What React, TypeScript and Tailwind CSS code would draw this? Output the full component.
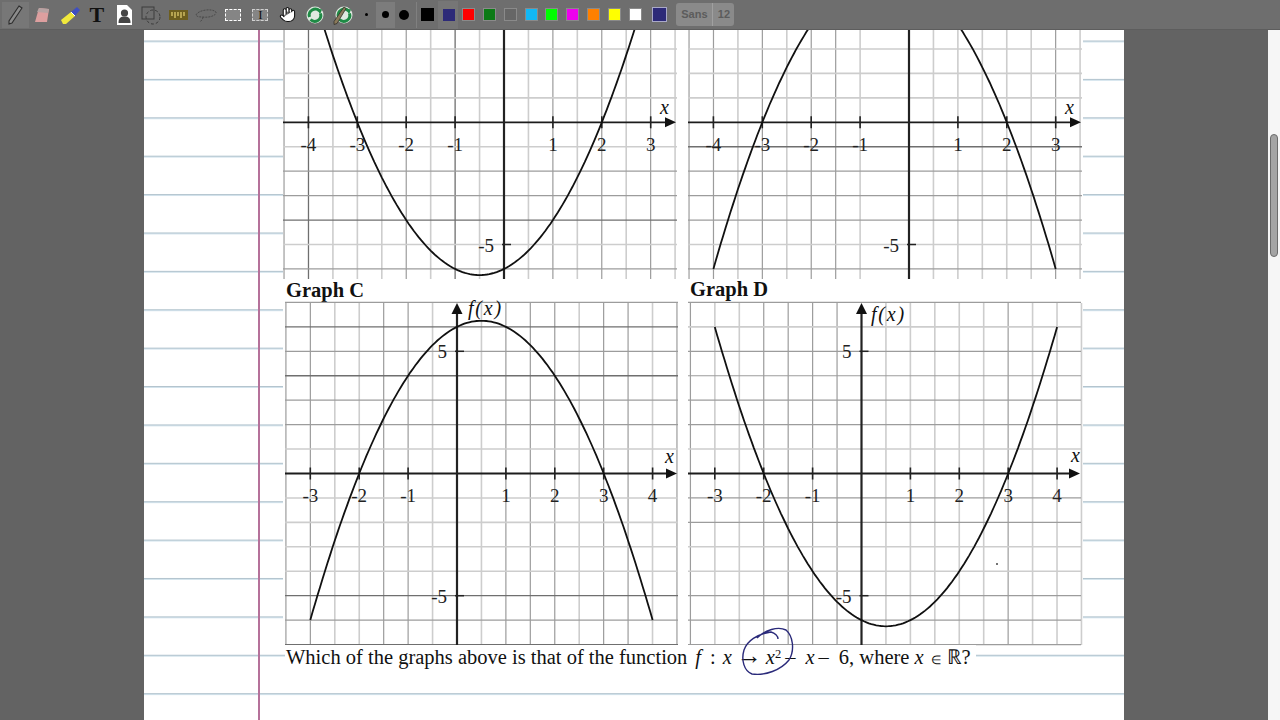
import React from 'react';
import { Hand } from 'lucide-react';

const UNIT = 48.9;
const CELL = 24.44;

const lineStyles = {
  l: { stroke: '#cdcdcd', width: 1.6 },
  m: { stroke: '#9c9c9c', width: 1.2 },
  d: { stroke: '#6f6f6f', width: 1.3 },
} as const;

type Tone = keyof typeof lineStyles;

type GraphProps = {
  width: number;
  height: number;
  ox: number;
  oy: number;
  kStart: number; // first vertical grid line, in half units from the axis
  jStart: number; // first horizontal grid line
  vTones: string;
  hTones: string;
  fn: (x: number) => number;
  from: number;
  to: number;
  ticks: number[];
  xLabel: [number, number];
  yLabels: [string, number, number][];
  fxLabel?: [number, number];
  children?: React.ReactNode;
};

function Graph({ width, height, ox, oy, kStart, jStart, vTones, hTones, fn, from, to, ticks, xLabel, yLabels, fxLabel, children }: GraphProps) {
  const pts: string[] = [];
  for (let x = from; x <= to + 0.001; x += 0.05) {
    pts.push(`${(ox + UNIT * x).toFixed(1)},${(oy - CELL * fn(x)).toFixed(1)}`);
  }

  return (
    <svg width={width} height={height} viewBox={`0 0 ${width} ${height}`} className={`block shrink-0 ${fxLabel ? 'overflow-visible' : ''}`}>
      {vTones.split('').map((t, i) => {
        if (t === '.') return null;
        const s = lineStyles[t as Tone];
        const x = ox + (kStart + i) * CELL;
        return <line key={i} x1={x} x2={x} y1={0} y2={height} stroke={s.stroke} strokeWidth={s.width} />;
      })}
      {hTones.split('').map((t, i) => {
        if (t === '.') return null;
        const s = lineStyles[t as Tone];
        const y = oy + (jStart + i) * CELL;
        return <line key={i} x1={0} x2={width} y1={y} y2={y} stroke={s.stroke} strokeWidth={s.width} />;
      })}

      {/* axes */}
      <line x1={0} x2={width - 6} y1={oy} y2={oy} stroke="#1c1c1c" strokeWidth={1.8} />
      <polygon points={`${width - 1},${oy} ${width - 12},${oy - 5} ${width - 12},${oy + 5}`} fill="#111" />
      <line x1={ox} x2={ox} y1={fxLabel ? 6 : 0} y2={height} stroke="#222" strokeWidth={2.2} />
      {fxLabel && <polygon points={`${ox},0 ${ox - 5.5},11 ${ox + 5.5},11`} fill="#111" />}

      {ticks.map((n) => {
        const x = ox + n * UNIT;
        return (
          <g key={n}>
            <line x1={x} x2={x} y1={oy - 6} y2={oy + 6} stroke="#222" strokeWidth={1.6} />
            <text x={x} y={oy + 28.3} textAnchor="middle" fontSize={19} fill="#222">{n}</text>
          </g>
        );
      })}
      {yLabels.map(([label, y, tx]) => (
        <g key={label}>
          <line x1={ox - 2} x2={ox + 7} y1={oy - y * CELL} y2={oy - y * CELL} stroke="#222" strokeWidth={1.5} />
          <text x={ox - tx} y={oy - y * CELL + 7} textAnchor="end" fontSize={19} fill="#222">{label}</text>
        </g>
      ))}

      <polyline points={pts.join(' ')} fill="none" stroke="#111" strokeWidth={1.8} />

      <text x={xLabel[0]} y={xLabel[1]} fontSize={20} fontStyle="italic" fill="#111">x</text>
      {fxLabel && (
        <text x={fxLabel[0]} y={fxLabel[1]} fontSize={20} fontStyle="italic" letterSpacing={1.8} fill="#111">f(x)</text>
      )}
      {children}
    </svg>
  );
}

function Slot({ selected, children }: { selected?: boolean; children: React.ReactNode }) {
  return (
    <div className={`flex h-[26px] w-[27.25px] shrink-0 items-center justify-center ${selected ? 'bg-[#777777]' : ''}`}>
      {children}
    </div>
  );
}

function RefreshBadge() {
  return (
    <>
      <circle cx="10" cy="10" r="8.5" fill="#dfe8e0" />
      <path d="M4.5 12a6 6 0 0 1 10-6" fill="none" stroke="#1f8a45" strokeWidth="3" />
      <path d="M15.5 8.5a6 6 0 0 1-10 6" fill="none" stroke="#1f8a45" strokeWidth="3" />
      <path d="M12 3.5l5 1-2 5z" fill="#1f8a45" />
    </>
  );
}

const toolIcons: React.ReactNode[] = [
  <svg key="pen" width="20" height="22" viewBox="0 0 20 22">
    <path d="M14 2l3 2-10 15-3 1 0-3z" fill="#8c8c8c" stroke="#2e2e2e" strokeWidth="1.1" />
  </svg>,
  <svg key="eraser" width="20" height="20" viewBox="0 0 20 20">
    <path d="M7 3l10 1-2 13H3z" fill="#dd9f9f" />
    <path d="M7 3l10 1-1 4-11-1z" fill="#b7a3a3" />
  </svg>,
  <svg key="marker" width="22" height="20" viewBox="0 0 22 20">
    <path d="M2 15l10-8 4 4-9 8H4z" fill="#f0e83c" />
    <path d="M12 7l6-5 3 3-5 6z" fill="#3f4fc0" />
    <path d="M12 7l4 4" stroke="#ffffff" strokeWidth="1" />
  </svg>,
  <span key="t" className="text-[22px] leading-none font-bold text-[#111111]">T</span>,
  <svg key="file" width="15" height="20" viewBox="0 0 15 20">
    <path d="M0 0h10l5 5v15H0z" fill="#ffffff" />
    <circle cx="7.5" cy="8" r="3.6" fill="#444444" />
    <path d="M1.5 18c0-5 2-6.5 6-6.5s6 1.5 6 6.5z" fill="#444444" />
  </svg>,
  <svg key="shape" width="22" height="22" viewBox="0 0 22 22" fill="none" stroke="#3c3c3c" strokeWidth="1">
    <rect x="2" y="3" width="12" height="12" />
    <circle cx="13" cy="13" r="7" strokeDasharray="3 2" />
  </svg>,
  <svg key="ruler" width="19" height="10" viewBox="0 0 19 10">
    <rect width="19" height="10" fill="#6d5e1e" />
    <path d="M3 2v4M6 2v6M9 2v4M12 2v6M15 2v4" stroke="#e6d373" strokeWidth="1.2" />
  </svg>,
  <svg key="lasso" width="24" height="16" viewBox="0 0 24 16" fill="none" stroke="#4a4a4a" strokeWidth="1">
    <path d="M2 8c2-5 16-7 20-3 1 3-6 6-13 5C6 10 3 10 2 8zM9 10c0 2-2 4-3 5" strokeDasharray="2 1" />
  </svg>,
  <div key="marquee" className="h-[12px] w-[16px] border border-dashed border-white bg-[#858585]" />,
  <div key="select" className="flex h-[12px] w-[16px] items-center justify-center border border-dashed border-[#d0d0d0] bg-[#858585]">
    <span className="text-[13px] leading-none text-[#111111]">I</span>
  </div>,
  <Hand key="hand" size={17} fill="#ffffff" stroke="#111111" strokeWidth={1.5} />,
  <svg key="refresh" width="20" height="20" viewBox="0 0 20 20"><RefreshBadge /></svg>,
  <svg key="penrefresh" width="22" height="20" viewBox="0 0 22 20">
    <g transform="translate(3 0)"><RefreshBadge /></g>
    <path d="M13 2l2 1.5-9 15-3 1v-3z" fill="#8a7a5a" stroke="#33302a" strokeWidth="0.8" />
  </svg>,
];

const swatches = [
  'bg-[#ff0000]',
  'bg-[#0c7a16]',
  'bg-[#666666]',
  'bg-[#12b8f5]',
  'bg-[#00ff00]',
  'bg-[#ee00ee]',
  'bg-[#ff8000]',
  'bg-[#ffff00]',
  'bg-[#ffffff]',
];

function Toolbar() {
  return (
    <div className="flex h-[30px] shrink-0 items-center border-b border-[#5d5d5d] bg-[#6e6e6e] pl-[1.5px]">
      {toolIcons.map((icon, i) => (
        <Slot key={i} selected={i === 0}>{icon}</Slot>
      ))}
      <div className="ml-[1px] flex h-[26px] w-[19px] items-center justify-center">
        <div className="h-[3px] w-[3px] rounded-full bg-black" />
      </div>
      <div className="flex h-[26px] w-[19px] items-center justify-center bg-[#7c7c7c]">
        <div className="h-[7px] w-[7px] rounded-full bg-black" />
      </div>
      <div className="flex h-[26px] w-[19px] items-center justify-center">
        <div className="h-[10px] w-[10px] rounded-full bg-black" />
      </div>
      <div className="ml-[2px] h-[26px] w-px bg-[#808080]" />
      <div className="flex h-[26px] w-[21px] items-center justify-center">
        <div className="h-[13px] w-[13px] bg-black" />
      </div>
      <div className="flex h-[28px] w-[20.5px] items-center justify-center bg-[#767676] pl-[2px]">
        <div className="h-[12px] w-[12px] bg-[#2d2a78]" />
      </div>
      {swatches.map((c) => (
        <div key={c} className="flex h-[26px] w-[20.8px] items-center justify-center">
          <div className={`h-[13px] w-[13px] border border-[#8a8a8a] ${c}`} />
        </div>
      ))}
      <div className="flex h-[26px] w-[29px] items-center justify-center">
        <div className="h-[15px] w-[15px] border border-[#a9a9c8] bg-[#2d2a78]" />
      </div>
      <div className="ml-[2px] flex h-[23px] font-['Liberation_Sans',sans-serif] text-[11px] font-bold text-[#5c5c5c]">
        <div className="flex w-[37px] items-center justify-center rounded-l-[3px] border-r border-[#a0a0a0] bg-[#8a8a8a]">Sans</div>
        <div className="flex w-[21px] items-center justify-center rounded-r-[3px] bg-[#8a8a8a]">12</div>
      </div>
    </div>
  );
}

function Question() {
  return (
    <div className="relative ml-[2px] inline-block whitespace-nowrap bg-white pr-[5px] pl-px text-[20.5px] leading-[24px] text-[#111111]">
      Which of the graphs above is that of the function
      <i className="ml-[8px]">f</i>
      <span className="ml-[9px]">:</span>
      <i className="ml-[7px]">x</i>
      <span className="ml-[5px] text-[25px] leading-[0]">→</span>
      <i className="ml-[4px]">x</i>
      <sup className="text-[12.5px] leading-none">2</sup>
      <span className="ml-[4px]">–</span>
      <i className="ml-[10px]">x</i>
      <span className="ml-[4px]">–</span>
      <span className="ml-[10px]">6, where</span>
      <i className="ml-[5px]">x</i>
      <span className="ml-[7px] text-[12px] leading-[0]">∈</span>
      <span className="ml-[6px]">ℝ?</span>
      {/* pen annotation around x squared */}
      <svg width="65" height="60" viewBox="735 622 65 60" className="absolute top-[-23px] left-[450px]">
        <path
          d="M757 638C765 630 778 626 786 630C793 636 795 650 789 660C781 670 765 676 752 674C744 671 741 660 744 650C747 641 757 634 771 632C775 633 778 636 778 639"
          fill="none"
          stroke="#2a2a7a"
          strokeWidth="1.4"
        />
      </svg>
    </div>
  );
}

export default function App() {
  return (
    <div className="flex h-screen w-full flex-col overflow-hidden bg-[#636363] font-['Liberation_Serif',serif]">
      <Toolbar />
      <div className="flex min-h-0 flex-1">
        <div className="w-[144px] shrink-0" />
        <div className="flex w-[980px] shrink-0 bg-white bg-[linear-gradient(#b3c4ce_0,#b3c4ce_1px,#d3e3ec_1px,#d3e3ec_2px,transparent_2px)] bg-[length:100%_38.4px] bg-[position:0_10.5px]">
          <div className="w-[116px] shrink-0 border-r-2 border-[#b5719a]" />
          <div className="pl-[23px]">
            <div className="w-[800px] bg-white">
              <div className="flex gap-[11px]">
                <Graph
                  width={394} height={249} ox={221} oy={92.3} kStart={-9} jStart={-3}
                  vTones="mdlllmldl.lmlmlml" hTones="lll.lmmdlm"
                  fn={(x) => x * x + x - 6} from={-3.75} to={2.75}
                  ticks={[-4, -3, -2, -1, 1, 2, 3]}
                  xLabel={[377, 84]}
                  yLabels={[['-5', -5, 10]]}
                />
                <Graph
                  width={394} height={249} ox={221} oy={92.3} kStart={-9} jStart={-3}
                  vTones="mmlmlmml.llllllml" hTones="lll.dmmmlm"
                  fn={(x) => -x * x - x + 6} from={-4} to={3}
                  ticks={[-4, -3, -2, -1, 1, 2, 3]}
                  xLabel={[377, 84]}
                  yLabels={[['-5', -5, 10]]}
                />
              </div>
              <div className="flex">
                <div className="w-[405px] pl-[2px]">
                  <div className="h-[24px] pl-px text-[20.5px] leading-[23px] font-bold text-[#111111]">Graph C</div>
                  <Graph
                    width={393} height={342} ox={172} oy={170.5} kStart={-7} jStart={-7}
                    vTones="mmllmml.lmmmlmmlm" hTones="mdmdmml.lllldmd"
                    fn={(x) => -x * x + x + 6} from={-3} to={4}
                    ticks={[-3, -2, -1, 1, 2, 3, 4]}
                    xLabel={[380, 160]}
                    yLabels={[['5', 5, 10], ['-5', -5, 10]]}
                    fxLabel={[183, 12]}
                  />
                </div>
                <div className="w-[393px]">
                  <div className="h-[24px] pl-[2px] text-[20.5px] leading-[20px] font-bold text-[#111111]">Graph D</div>
                  <Graph
                    width={393} height={342} ox={173.5} oy={170.5} kStart={-7} jStart={-7}
                    vTones="mllmmmm.lllllmlll" hTones="mlmmmml.mmllmmm"
                    fn={(x) => x * x - x - 6} from={-3} to={4}
                    ticks={[-3, -2, -1, 1, 2, 3, 4]}
                    xLabel={[383, 159]}
                    yLabels={[['5', 5, 10], ['-5', -5, 10]]}
                    fxLabel={[183, 18]}
                  >
                    <circle cx={309} cy={261} r={1} fill="#444444" />
                  </Graph>
                </div>
              </div>
            </div>
            <Question />
          </div>
        </div>
        <div className="flex-1" />
        <div className="relative w-[12px] shrink-0 bg-[#f6f6f6]">
          <div className="absolute top-[104px] left-[2px] h-[123px] w-[8px] rounded-full border border-[#6b6b6b] bg-[#a4a4a4]" />
        </div>
      </div>
    </div>
  );
}
